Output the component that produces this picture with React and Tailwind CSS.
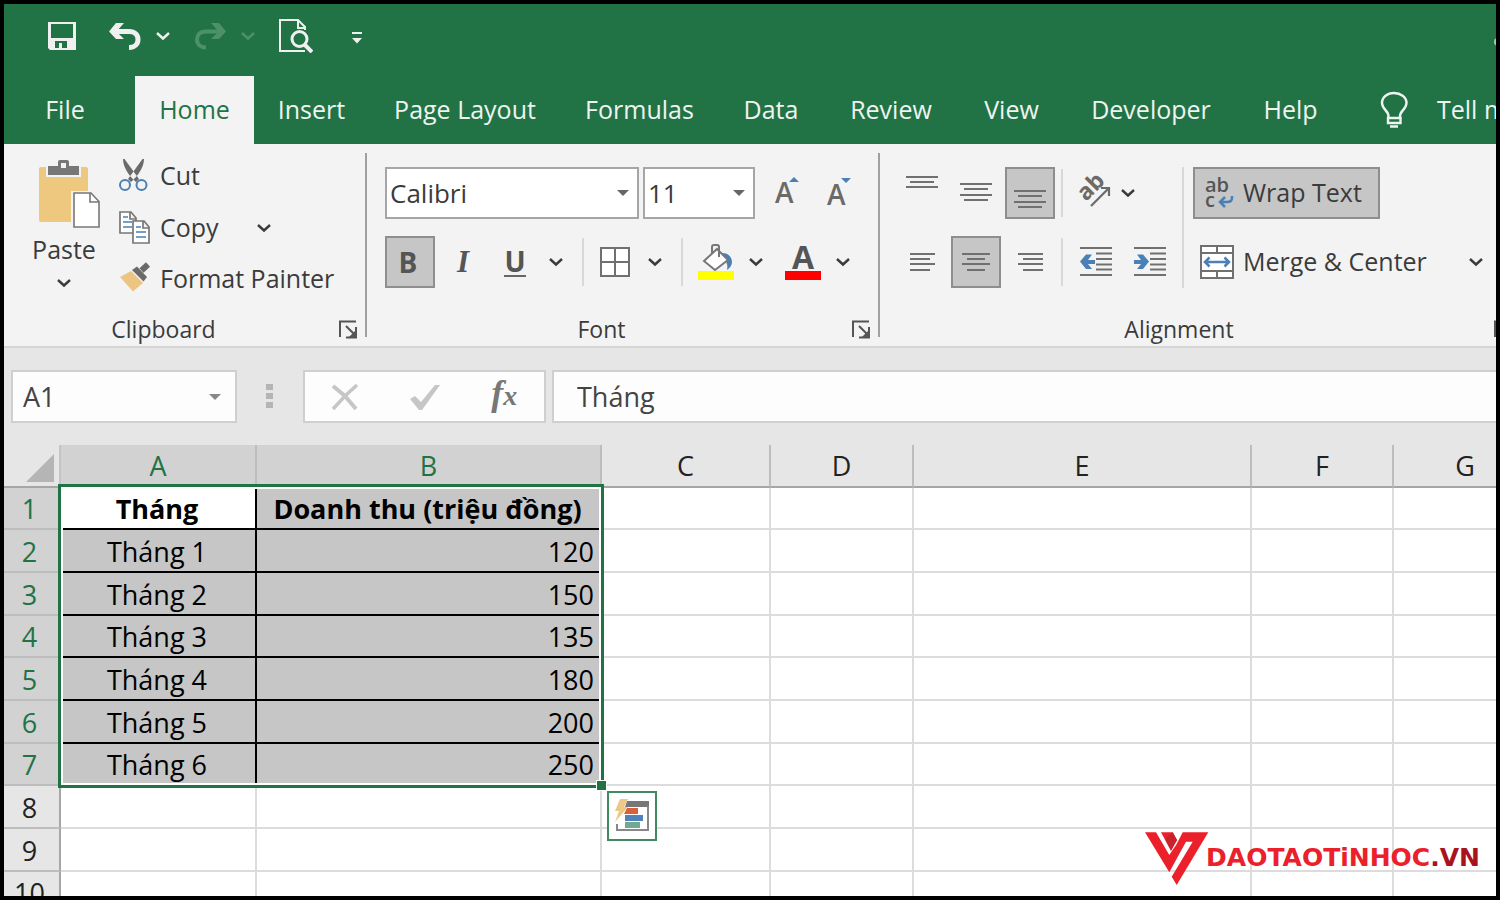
import { useState } from 'react';

const tabs = [
  { name: 'File', width: 'w-[122px] mr-[9px]' },
  { name: 'Home', width: 'w-[119px]' },
  { name: 'Insert', width: 'w-[115px]' },
  { name: 'Page Layout', width: 'w-[192px]' },
  { name: 'Formulas', width: 'w-[157px]' },
  { name: 'Data', width: 'w-[106px]' },
  { name: 'Review', width: 'w-[134px]' },
  { name: 'View', width: 'w-[107px]' },
  { name: 'Developer', width: 'w-[172px]' },
  { name: 'Help', width: 'w-[107px]' },
];

const columns = [
  { name: 'A', width: 'w-[196px]' },
  { name: 'B', width: 'w-[345px]' },
  { name: 'C', width: 'w-[169px]' },
  { name: 'D', width: 'w-[143px]' },
  { name: 'E', width: 'w-[338px]' },
  { name: 'F', width: 'w-[142px]' },
  { name: 'G', width: 'w-[144px]' },
];

const data = [
  ['Tháng', 'Doanh thu (triệu đồng)'],
  ['Tháng 1', '120'],
  ['Tháng 2', '150'],
  ['Tháng 3', '135'],
  ['Tháng 4', '180'],
  ['Tháng 5', '200'],
  ['Tháng 6', '250'],
  [],
  [],
  [],
];

function Chevron({ className = '' }) {
  return (
    <svg className={`w-[14px] h-[10px] shrink-0 ${className}`} viewBox="0 0 14 10" fill="none" stroke="currentColor" strokeWidth="2.4">
      <path d="M1 2l6 5.5L13 2" />
    </svg>
  );
}

function Caret({ className = '' }) {
  return (
    <svg className={`w-3 h-[6px] pointer-events-none ${className}`} viewBox="0 0 12 6" fill="currentColor">
      <path d="M0 0h12L6 6z" />
    </svg>
  );
}

function IconButton({ label, className = 'w-10', active, children }) {
  return (
    <button
      aria-label={label}
      className={`h-[52px] shrink-0 flex items-center justify-center ${className} ${active ? 'bg-[#c6c6c6] border-2 border-[#8e8e8e]' : ''}`}
    >
      {children}
    </button>
  );
}

function Divider({ className = '' }) {
  return <div className={`w-[2px] h-12 shrink-0 bg-[#d8d8d8] ${className}`} />;
}

function Group({ label, className, children }) {
  return (
    <section className={`flex flex-col shrink-0 ${className}`}>
      <div className="flex-1">{children}</div>
      <div className="flex items-center h-[34px]">
        <span className="flex-1 text-center text-[23px] leading-7">{label}</span>
        <button aria-label={`${label} settings`} className="w-[42px] flex justify-end pr-[7px]">
          <svg className="w-[19px] h-[19px]" viewBox="0 0 19 19" fill="none" stroke="#555" strokeWidth="2">
            <path d="M1 17V1.500h16M7 6l9 9M17 7v10.500H7" />
            <path d="M17 10v7.500H9.500z" fill="#555" stroke="none" />
          </svg>
        </button>
      </div>
    </section>
  );
}

function Lines({ rows, width = 32, height = 40 }) {
  return (
    <svg width={width} height={height} viewBox={`0 0 ${width} ${height}`} stroke="#707070" strokeWidth="2">
      {rows.map(([x1, x2, y]) => (
        <path key={y} d={`M${x1} ${y}H${x2}`} />
      ))}
    </svg>
  );
}

function QuickAccess() {
  return (
    <div className="h-[72px] pb-2 pl-9 flex items-center text-[#f0f0f0] overflow-hidden">
      <button aria-label="Save" className="w-11 flex justify-center">
        <svg className="w-7 h-7" viewBox="0 0 28 28">
          <path fill="currentColor" fillRule="evenodd" d="M0 0h28v28H2l-2-2zM3 2v14h22V2zM7 19v7h4v-5h3v5h5v-7z" />
        </svg>
      </button>
      <button aria-label="Undo" className="ml-[21px] w-10 flex justify-center">
        <svg className="w-8 h-7" viewBox="0 0 32 28" fill="none" stroke="currentColor" strokeWidth="5">
          <path d="M5 9.500h15c6 0 9 3.500 9 8s-3.500 8-9 8" />
          <path d="M7 1h8L7.500 9.500 15 17H7L0 9.500z" fill="currentColor" stroke="none" />
        </svg>
      </button>
      <button aria-label="Undo history" className="ml-2 w-5 flex justify-center">
        <Chevron />
      </button>
      <button aria-label="Redo" className="ml-[17px] w-10 flex justify-center text-[#4d9168]">
        <svg className="w-8 h-7" viewBox="0 0 32 28" fill="none" stroke="currentColor" strokeWidth="4">
          <path d="M27 9.500H12c-6 0-9 3.500-9 8s3.500 8 9 8" />
          <path d="M25 1h-8l7.500 8.500L17 17h8l7-7.500z" fill="currentColor" stroke="none" />
        </svg>
      </button>
      <button aria-label="Redo history" className="ml-2 w-5 flex justify-center text-[#4d9168]">
        <Chevron />
      </button>
      <button aria-label="Print preview" className="ml-[18px] w-10 flex justify-center">
        <svg className="w-[34px] h-[34px]" viewBox="0 0 34 34" fill="none" stroke="currentColor" strokeWidth="2">
          <path d="M26 32H1V1h18l7 7v3M19 1v8h7" />
          <circle cx="20.500" cy="20" r="7.500" strokeWidth="3" />
          <path d="M26 26l7 7" strokeWidth="4" />
        </svg>
      </button>
      <button aria-label="Customize toolbar" className="ml-[31px] mt-1 w-5 flex justify-center">
        <svg className="w-[10px] h-3" viewBox="0 0 10 12" fill="currentColor">
          <path d="M0 0h10v2H0zM0 6h10l-5 5.500z" />
        </svg>
      </button>
      <span className="ml-auto mt-3 -mr-1.5 w-2 h-2 shrink-0 rounded-full bg-[#a9cbb6]" />
    </div>
  );
}

function TabBar() {
  const [active, setActive] = useState('Home');

  return (
    <nav className="h-[68px] flex text-[25px] overflow-hidden">
      {tabs.map((tab) => (
        <button
          key={tab.name}
          onClick={() => setActive(tab.name)}
          className={`shrink-0 whitespace-nowrap text-center ${tab.width} ${
            active === tab.name ? 'bg-[#f3f3f3] text-[#217346]' : 'text-[#eef4f0]'
          }`}
        >
          {tab.name}
        </button>
      ))}
      <button className="shrink-0 whitespace-nowrap flex items-center text-[#eef4f0]">
        <svg className="ml-9 mr-7 w-[29px] h-[38px]" viewBox="0 0 29 38" fill="none" stroke="currentColor" strokeWidth="2.400">
          <path d="M8.500 28v-3c0-5-6.500-7-6.500-13C2 6 7.500 2 14 2s12.500 4 12.500 10c0 6-6.500 8-6.500 13v3" />
          <path d="M8 27h12.500v5H8zM10 35.500h8" />
        </svg>
        Tell me
      </button>
    </nav>
  );
}

function Clipboard() {
  return (
    <Group label="Clipboard" className="w-[361px]">
      <div className="flex">
        <button className="ml-6 mt-[14px] w-[72px] flex flex-col items-center">
          <svg className="w-[72px] h-[72px]" viewBox="0 0 72 72">
            <path fill="#eec87f" d="M13 9h45q2 0 2 2v22H43v31H13q-2 0-2-2V11q0-2 2-2z" />
            <path fill="#777" stroke="#f3f3f3" strokeWidth="2" d="M19 18V7h10V4q0-3 3-3h7q3 0 3 3v3h10v11z" />
            <path fill="#f3f3f3" d="M33 5h5v5h-5z" />
            <path fill="#fff" stroke="#777" strokeWidth="1.600" d="M46 35h17l8 8.500V69H46z" />
            <path fill="none" stroke="#777" strokeWidth="1.600" d="M62 35v9h9" />
          </svg>
          <span className="mt-[5px] leading-7">Paste</span>
          <Chevron className="mt-[15px]" />
        </button>
        <div className="ml-[18px] mt-[6px] flex flex-col">
          <button className="h-[52px] flex items-center gap-[10px]">
            <svg className="w-8 h-[34px]" viewBox="0 0 32 34" fill="none">
              <path fill="#6a6a6a" d="M5 0h1.500L21 20l-3 3C11 17 5 8 5 0zM26 0h-1.500L10 20l3 3C20 17 26 8 26 0z" />
              <g stroke="#4a80b5" strokeWidth="2">
                <circle cx="7" cy="26" r="5" />
                <circle cx="23.500" cy="26" r="5" />
              </g>
            </svg>
            Cut
          </button>
          <div className="h-[51px] flex items-center">
            <button className="flex items-center gap-[10px]">
              <svg className="w-8 h-[34px]" viewBox="0 0 32 34" fill="#fff" strokeWidth="1.700">
                <path stroke="#777" d="M2 1h11l5 6v15H2zM12 1v7h6" />
                <path stroke="#4a80b5" d="M5 6h5M5 11h9M5 16h9" />
                <path stroke="#777" d="M15 10h11l5 6v16H15zM25 10v7h6" />
                <path stroke="#4a80b5" d="M18 16h5M18 21h10M18 26h10" />
              </svg>
              Copy
            </button>
            <button aria-label="Copy options" className="ml-8 px-1.5">
              <Chevron />
            </button>
          </div>
          <button className="h-[51px] flex items-center gap-[10px] whitespace-nowrap">
            <svg className="w-8 h-[34px]" viewBox="0 0 32 34">
              <path fill="#ecc583" d="M2 15l11-6 12 12-10 8.500z" />
              <path fill="#6a6a6a" d="M14 8l5-3.500 10 10.500-3.500 4.500z" />
              <path stroke="#6a6a6a" strokeWidth="6" d="M23.500 8.500l6.500-6" />
            </svg>
            Format Painter
          </button>
        </div>
      </div>
    </Group>
  );
}

function FontGroup() {
  return (
    <Group label="Font" className="w-[511px]">
      <div className="pt-[23px] pl-[18px] flex flex-col gap-[17px]">
        <div className="flex">
          <div className="grid items-center w-[254px] mr-1">
            <select aria-label="Font name" className="col-start-1 row-start-1 appearance-none h-[52px] w-full bg-white border-2 border-[#a6a6a6] pl-[3px] text-[26px]">
              <option>Calibri</option>
            </select>
            <Caret className="col-start-1 row-start-1 justify-self-end mr-[10px] text-[#666]" />
          </div>
          <div className="grid items-center w-[112px]">
            <select aria-label="Font size" className="col-start-1 row-start-1 appearance-none h-[52px] w-full bg-white border-2 border-[#a6a6a6] pl-[3px] text-[26px]">
              <option>11</option>
            </select>
            <Caret className="col-start-1 row-start-1 justify-self-end mr-[10px] text-[#666]" />
          </div>
          <IconButton label="Increase font size" className="ml-[5px] w-[52px]">
            <svg className="w-7 h-9 overflow-visible" viewBox="0 0 28 36">
              <text x="3" y="28" fontSize="28" fontWeight="600" fill="#6a6a6a">A</text>
              <path fill="#4a80b5" d="M17 7h10l-5-5z" />
            </svg>
          </IconButton>
          <IconButton label="Decrease font size" className="w-[52px]">
            <svg className="w-7 h-9 overflow-visible" viewBox="0 0 28 36">
              <text x="3" y="30" fontSize="28" fontWeight="600" fill="#6a6a6a">A</text>
              <path fill="#4a80b5" d="M17 3h10l-5 5z" />
            </svg>
          </IconButton>
        </div>
        <div className="flex items-center">
          <IconButton label="Bold" className="w-[50px]" active>
            <span className="pr-1 text-[28px] font-bold text-[#555]">B</span>
          </IconButton>
          <IconButton label="Italic" className="ml-[2px] w-[52px]">
            <span className="font-['Liberation_Serif',serif] text-[31px] font-bold italic text-[#555]">I</span>
          </IconButton>
          <IconButton label="Underline" className="w-[52px]">
            <span className="text-[28px] leading-[28px] font-bold text-[#555] border-b-2 border-[#666]">U</span>
          </IconButton>
          <IconButton label="Underline options" className="w-[30px]">
            <Chevron />
          </IconButton>
          <Divider className="ml-[11px] mr-[11px]" />
          <IconButton label="Borders">
            <svg className="w-[30px] h-[30px]" viewBox="0 0 30 30" fill="#fff" stroke="#707070" strokeWidth="2">
              <path d="M1 1h28v28H1zM15 1v28M1 15h28" />
            </svg>
          </IconButton>
          <IconButton label="Border options">
            <Chevron />
          </IconButton>
          <Divider className="ml-[6px] mr-[13px]" />
          <IconButton label="Fill color">
            <svg className="w-9 h-9" viewBox="0 0 36 36">
              <path fill="#4a80b5" d="M24 9c8 0 10 6 10 9 0 3-2 6-5 8 1-5 0-9-5-12z" />
              <path fill="#fff" stroke="#777" strokeWidth="2" d="M19 5l11 11-13 10L6 17z" />
              <path fill="none" stroke="#777" strokeWidth="2" d="M14 10V3q0-2 2-2h3q2 0 2 2v10" />
              <path fill="#ffff00" d="M0 27h36v9H0z" />
            </svg>
          </IconButton>
          <IconButton label="Fill color options">
            <Chevron />
          </IconButton>
          <IconButton label="Font color" className="ml-[7px] w-10">
            <svg className="w-9 h-9 overflow-visible" viewBox="0 0 36 36">
              <text x="18" y="25" textAnchor="middle" fontSize="32" fontWeight="700" fill="#555">A</text>
              <path fill="#ff0000" d="M0 27h36v9H0z" />
            </svg>
          </IconButton>
          <IconButton label="Font color options">
            <Chevron />
          </IconButton>
        </div>
      </div>
    </Group>
  );
}

function Alignment() {
  return (
    <Group label="Alignment" className="w-[640px]">
      <div className="flex pt-[23px]">
        <div className="w-[302px] pl-[17px] flex flex-col gap-[17px]">
          <div className="flex items-center gap-1">
            <IconButton label="Top align" className="w-[50px]">
              <Lines rows={[[0, 32, 4], [4, 28, 9], [0, 32, 14]]} />
            </IconButton>
            <IconButton label="Middle align" className="w-[50px]">
              <Lines rows={[[0, 32, 11], [4, 28, 16], [0, 32, 22], [4, 28, 27]]} />
            </IconButton>
            <IconButton label="Bottom align" className="w-[50px]" active>
              <Lines rows={[[0, 32, 18], [4, 28, 23], [0, 32, 29], [4, 28, 34]]} />
            </IconButton>
            <Divider className="ml-[2px]" />
            <IconButton label="Orientation" className="ml-1 w-[42px]">
              <svg className="w-9 h-8 overflow-visible" viewBox="0 0 36 32" fill="none" stroke="#6a6a6a">
                <text x="0" y="0" transform="translate(12 25) rotate(-45)" fontSize="23" fontWeight="700" fill="#6a6a6a" stroke="none">ab</text>
                <path strokeWidth="2.200" d="M17 29l18-18M27 11h8v8" />
              </svg>
            </IconButton>
            <IconButton label="Orientation options" className="w-[22px]">
              <Chevron />
            </IconButton>
          </div>
          <div className="flex items-center gap-1">
            <IconButton label="Align left" className="w-[50px]">
              <Lines rows={[[4, 29, 12], [4, 24, 17], [4, 29, 22], [4, 24, 28]]} />
            </IconButton>
            <IconButton label="Center" className="w-[50px]" active>
              <Lines rows={[[2, 30, 12], [7, 25, 17], [2, 30, 22], [7, 25, 28]]} />
            </IconButton>
            <IconButton label="Align right" className="w-[50px]">
              <Lines rows={[[4, 29, 12], [9, 29, 17], [4, 29, 22], [9, 29, 28]]} />
            </IconButton>
            <Divider className="ml-[2px]" />
            <IconButton label="Decrease indent" className="ml-1 w-[50px]">
              <svg className="w-8 h-[30px]" viewBox="0 0 32 30" stroke="#707070" strokeWidth="2">
                <path d="M0 1h32M16 6.500h16M16 12h16M16 17.500h16M16 22.500h16M0 28h32" />
                <path stroke="none" fill="#4a80b5" d="M0 14.500L6 7.500h6L8 13h7v4H8l4 5H6z" />
              </svg>
            </IconButton>
            <IconButton label="Increase indent" className="w-[50px]">
              <svg className="w-8 h-[30px]" viewBox="0 0 32 30" stroke="#707070" strokeWidth="2">
                <path d="M0 1h32M16 6.500h16M16 12h16M16 17.500h16M16 22.500h16M0 28h32" />
                <path stroke="none" fill="#4a80b5" d="M15 14.500L9 7.500H3L7 13H0v4h7l-4 5h6z" />
              </svg>
            </IconButton>
          </div>
        </div>
        <div className="w-[2px] h-[121px] bg-[#d8d8d8]" />
        <div className="ml-[9px] flex flex-col gap-[17px]">
          <button className="w-[187px] h-[52px] flex items-center gap-2 pl-[10px] bg-[#c6c6c6] border-2 border-[#8e8e8e] whitespace-nowrap">
            <svg className="w-[30px] h-9 shrink-0 overflow-visible" viewBox="0 0 30 36" fill="#555">
              <text y="17" fontSize="20" fontWeight="600">
                ab
                <tspan x="0" y="32">c</tspan>
              </text>
              <path fill="none" stroke="#4a80b5" strokeWidth="2.500" d="M27 21v2q0 4-5 4h-6M20 22l-5 5 5 5" />
            </svg>
            Wrap Text
          </button>
          <div className="h-[52px] flex items-center">
            <button className="pl-[7px] flex items-center gap-[9px] whitespace-nowrap">
              <svg className="w-[34px] h-[34px]" viewBox="0 0 34 34" fill="#fff" stroke="#707070" strokeWidth="2">
                <path d="M1 1h32v32H1zM1 8h32M1 26h32M17 1v7M17 26v7" />
                <path fill="none" stroke="#4a80b5" strokeWidth="2.500" d="M5 17h24M9.500 12.500L5 17l4.500 4.500M24.500 12.500L29 17l-4.500 4.500" />
              </svg>
              Merge &amp; Center
            </button>
            <button aria-label="Merge options" className="ml-9 px-1.5">
              <Chevron />
            </button>
          </div>
        </div>
      </div>
    </Group>
  );
}

function FormulaBar() {
  return (
    <div className="h-[97px] pt-[22px] pl-[7px] flex items-start text-[#444] text-[27px]">
      <div className="w-[226px] h-[53px] shrink-0 bg-[#fdfdfd] border-2 border-[#cfcfcf] flex items-center">
        <input aria-label="Name box" defaultValue="A1" className="min-w-0 flex-1 h-full pl-[10px] outline-none" />
        <button aria-label="Name list" className="px-[14px]">
          <Caret className="h-[8px] text-[#888]" />
        </button>
      </div>
      <div className="ml-[29px] mr-[30px] h-[52px] flex flex-col justify-center gap-[3px]">
        <span className="w-[7px] h-[6px] bg-[#b5b5b5]" />
        <span className="w-[7px] h-[6px] bg-[#b5b5b5]" />
        <span className="w-[7px] h-[6px] bg-[#b5b5b5]" />
      </div>
      <div className="w-[243px] h-[53px] shrink-0 bg-[#fdfdfd] border-2 border-[#cfcfcf] flex items-center">
        <button aria-label="Cancel" className="w-20 flex justify-center">
          <svg className="w-7 h-7" viewBox="0 0 28 28" stroke="#c6c6c6" fill="none">
            <path strokeWidth="4" d="M2 3l12 10 11 13" />
            <path strokeWidth="3.500" d="M26 2L14 13 2 26" />
          </svg>
        </button>
        <button aria-label="Enter" className="w-20 flex justify-center">
          <svg className="w-8 h-7" viewBox="0 0 32 28" fill="#c6c6c6">
            <path d="M1 16l5-3 6 6L26 2h5L13 27h-3z" />
          </svg>
        </button>
        <button aria-label="Insert function" className="w-20 pb-1 text-center font-['Liberation_Serif',serif] italic font-bold leading-8 text-[#777]">
          <span className="text-[36px]">f</span>
          <span className="text-[28px]">x</span>
        </button>
      </div>
      <input
        aria-label="Formula"
        defaultValue="Tháng"
        className="ml-[6px] min-w-0 flex-1 h-[53px] bg-[#fdfdfd] border-2 border-r-0 border-[#cfcfcf] pl-[23px] outline-none"
      />
    </div>
  );
}

function cellClass(row, col) {
  if (row > 6 || col > 1) return 'border-[#dcdcdc]';
  const fill = row === 0 && col === 0 ? 'bg-white' : 'bg-[#c6c6c6]';
  const align = row === 0 || col === 0 ? 'text-center pr-[2px]' : 'text-right pr-[6px]';
  const weight = row === 0 ? 'font-bold' : '';
  return `border-black text-black ${fill} ${align} ${weight}`;
}

function Sheet() {
  return (
    <div className="relative flex-1 min-h-0 overflow-hidden bg-white text-[27px] leading-8">
      <table className="table-fixed w-[1534px] border-separate border-spacing-0">
        <thead>
          <tr className="h-[43px]">
            <th className="w-[57px] p-0 bg-[#e6e6e6] border-b-2 border-r-2 border-b-[#a6a6a6] border-r-[#c4c4c4]">
              <svg className="ml-auto mr-[5px] mt-1 w-7 h-7" viewBox="0 0 28 28" fill="#b5b5b5">
                <path d="M28 0v28H0z" />
              </svg>
            </th>
            {columns.map((column, i) => (
              <th
                key={column.name}
                className={`p-0 font-normal border-b-2 border-r-2 border-b-[#a6a6a6] border-r-[#bdbdbd] ${column.width} ${
                  i < 2 ? 'bg-[#d2d2d2] text-[#217346]' : 'bg-[#e6e6e6] text-[#222]'
                }`}
              >
                {column.name}
              </th>
            ))}
          </tr>
        </thead>
        <tbody>
          {data.map((row, r) => (
            <tr key={r} className={r % 3 === 0 ? 'h-[42px]' : 'h-[43px]'}>
              <th
                className={`p-0 pt-[2px] pr-1 font-normal border-b-2 border-r-2 border-b-[#bdbdbd] border-r-[#a6a6a6] ${
                  r < 7 ? 'bg-[#d2d2d2] text-[#217346]' : 'bg-[#e6e6e6] text-[#222]'
                }`}
              >
                {r + 1}
              </th>
              {columns.map((column, c) => (
                <td key={column.name} className={`p-0 pt-[2px] border-b-2 border-r-2 whitespace-nowrap ${cellClass(r, c)}`}>
                  {row[c]}
                </td>
              ))}
            </tr>
          ))}
        </tbody>
      </table>

      {/* selected range with its fill handle */}
      <div className="absolute left-[54px] top-[39px] w-[546px] h-[304px] border-3 border-[#217346] shadow-[inset_0_0_0_2px_white] pointer-events-none">
        <span className="absolute -right-[6px] -bottom-[6px] w-[11px] h-[11px] bg-[#217346] border border-white" />
      </div>

      {/* quick analysis */}
      <button aria-label="Quick Analysis" className="absolute left-[603px] top-[346px] w-[50px] h-[50px] bg-white border-2 border-[#3f8a60] flex items-center justify-center">
        <svg className="w-9 h-9" viewBox="0 0 36 36">
          <path fill="#777" d="M13 3h22v6H11z" />
          <path fill="none" stroke="#888" strokeWidth="2" d="M34 8v24H3v-6" />
          <path fill="#d9603b" d="M13 10h11v6H10z" />
          <path fill="#4f82b8" d="M11 17h18v6H11z" />
          <path fill="#6fa893" d="M11 24h15v6H11z" />
          <path fill="#edc987" d="M6 1h8l-4 8h4L1 24l4-11H1z" />
        </svg>
      </button>
    </div>
  );
}

function Watermark() {
  return (
    <div className="absolute right-4 bottom-[9px] flex items-center">
      <svg className="w-16 h-14" viewBox="0 0 64 56">
        <path fill="#ec202a" d="M0 1.300h11L24.300 24l7.400-11 6-11.700h25.600L31.700 54l-5-8.300 21-35H41L24.300 41.300z" />
        <path fill="#ec202a" d="M16 1.300h11.700L32 9l-6 10.700z" />
        <path fill="#c9222c" d="M20 8l7.700-6.700L32 9l-6 10.700z" />
      </svg>
      <span className="-ml-[3px] mt-[-3px] font-['DejaVu_Sans',sans-serif] font-bold text-[25px] leading-7 text-[#ec202a]">
        DAOTAOTiNHOC<span className="text-[#a8131f]">.VN</span>
      </span>
    </div>
  );
}

export default function App() {
  return (
    <div className="relative h-screen flex flex-col overflow-hidden bg-[#e6e6e6] border-4 border-black font-['Open_Sans',sans-serif] text-[#3b3b3b]">
      <header className="bg-[#217346] shrink-0">
        <QuickAccess />
        <TabBar />
      </header>
      <div className="h-[204px] shrink-0 flex bg-[#f3f3f3] border-b-2 border-[#d5d5d5] text-[25px] overflow-hidden">
        <Clipboard />
        <div className="my-[9px] w-[2px] shrink-0 bg-[#a0a0a0]" />
        <FontGroup />
        <div className="my-[9px] w-[2px] shrink-0 bg-[#a0a0a0]" />
        <Alignment />
      </div>
      <FormulaBar />
      <Sheet />
      <Watermark />
    </div>
  );
}
